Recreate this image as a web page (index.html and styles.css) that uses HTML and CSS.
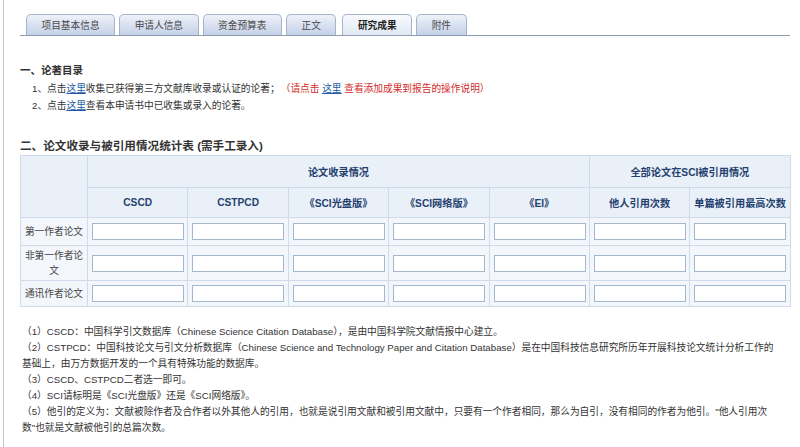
FILE: index.html
```html
<!DOCTYPE html>
<html lang="zh-CN">
<head>
<meta charset="utf-8">
<title>研究成果</title>
<link rel="stylesheet" href="styles.css">
</head>
<body>
<div class="page">
  <div class="tabs">
    <div class="tab">项目基本信息</div>
    <div class="tab">申请人信息</div>
    <div class="tab">资金预算表</div>
    <div class="tab">正文</div>
    <div class="tab active">研究成果</div>
    <div class="tab">附件</div>
  </div>

  <h2 class="h1">一、论著目录</h2>
  <ol class="links">
    <li>1、点击<a href="#">这里</a>收集已获得第三方文献库收录或认证的论著；<span class="red">（请点击 <a href="#">这里</a> 查看添加成果到报告的操作说明）</span></li>
    <li>2、点击<a href="#">这里</a>查看本申请书中已收集或录入的论著。</li>
  </ol>

  <h2 class="h2">二、论文收录与被引用情况统计表 (需手工录入)</h2>
  <table class="stats">
    <colgroup>
      <col class="c0"><col class="c"><col class="c"><col class="c"><col class="c"><col class="c"><col class="c"><col class="c">
    </colgroup>
    <tr class="r1">
      <th rowspan="2"></th>
      <th colspan="5">论文收录情况</th>
      <th colspan="2">全部论文在SCI被引用情况</th>
    </tr>
    <tr class="r2">
      <th>CSCD</th>
      <th>CSTPCD</th>
      <th>《SCI光盘版》</th>
      <th>《SCI网络版》</th>
      <th>《EI》</th>
      <th>他人引用次数</th>
      <th>单篇被引用最高次数</th>
    </tr>
    <tr class="r3">
      <td class="lbl">第一作者论文</td>
      <td><input type="text"></td><td><input type="text"></td><td><input type="text"></td><td><input type="text"></td><td><input type="text"></td><td><input type="text"></td><td><input type="text"></td>
    </tr>
    <tr class="r4">
      <td class="lbl">非第一作者论文</td>
      <td><input type="text"></td><td><input type="text"></td><td><input type="text"></td><td><input type="text"></td><td><input type="text"></td><td><input type="text"></td><td><input type="text"></td>
    </tr>
    <tr class="r5">
      <td class="lbl">通讯作者论文</td>
      <td><input type="text"></td><td><input type="text"></td><td><input type="text"></td><td><input type="text"></td><td><input type="text"></td><td><input type="text"></td><td><input type="text"></td>
    </tr>
  </table>

  <div class="notes">
    <p>（1）CSCD：中国科学引文数据库（Chinese Science Citation Database），是由中国科学院文献情报中心建立。</p>
    <p>（2）CSTPCD：中国科技论文与引文分析数据库（Chinese Science and Technology Paper and Citation Database）是在中国科技信息研究所历年开展科技论文统计分析工作的基础上，由万方数据开发的一个具有特殊功能的数据库。</p>
    <p>（3）CSCD、CSTPCD二者选一即可。</p>
    <p>（4）SCI请标明是《SCI光盘版》还是《SCI网络版》。</p>
    <p>（5）他引的定义为：文献被除作者及合作者以外其他人的引用，也就是说引用文献和被引用文献中，只要有一个作者相同，那么为自引，没有相同的作者为他引。"他人引用次数"也就是文献被他引的总篇次数。</p>
  </div>
</div>
</body>
</html>
```

FILE: styles.css
```css
html, body {
  margin: 0;
  padding: 0;
  background: #fff;
}

body {
  font-family: "Liberation Sans", "Noto Sans CJK SC", sans-serif;
  font-size: 9.7px;
  color: #333;
}

.page {
  margin-left: 3px;
  border-left: 1px solid #c6c6c6;
  min-height: 447px;
  padding: 0 10px 0 16px;
  box-sizing: border-box;
}

/* tabs */
.tabs {
  display: flex;
  align-items: flex-end;
  gap: 4px;
  padding: 14px 0 0 6px;
  border-bottom: 1px solid #8e9cb3;
}

.tab {
  height: 20px;
  line-height: 20px;
  padding: 0 14.5px;
  border: 1px solid #a6b4cb;
  border-bottom: none;
  border-radius: 5px 5px 0 0;
  background: linear-gradient(#eef2f9, #c4d1e8);
  color: #4a4a4a;
  font-family: "Noto Sans CJK SC", sans-serif;
  white-space: nowrap;
}

.tab.active {
  margin-left: 2px;
  background: linear-gradient(#f8fafd, #e0e8f4);
  font-weight: bold;
  color: #222;
}

/* headings */
.h1 {
  margin: 27px 0 0 0;
  font-size: 10.5px;
  line-height: 14px;
  font-weight: bold;
  color: #333;
}

.links {
  list-style: none;
  margin: 3px 0 0 0;
  padding: 0 0 0 12px;
  line-height: 17px;
}

.links a {
  color: #1d5ba8;
  text-decoration: underline;
}

.red {
  margin-left: 6px;
  color: #d22b2b;
}

.h2 {
  margin: 24px 0 1px 0;
  font-size: 11.6px;
  line-height: 16px;
  font-weight: bold;
  color: #333;
}

/* table */
.stats {
  width: 770px;
  border-collapse: collapse;
  table-layout: fixed;
  border: 1px solid #c7d5e6;
}

.stats .c0 { width: 67px; }
.stats .c { width: 100.4px; }

.stats th, .stats td {
  border: 1px solid #cfdbea;
  padding: 0;
  text-align: center;
  vertical-align: middle;
}

.stats th {
  background: #eaf0f8;
  color: #24406f;
  font-weight: bold;
  font-size: 10.2px;
  white-space: nowrap;
}

.stats td {
  background: #f3f6fa;
}

.stats .r1 { height: 32px; }
.stats .r2 { height: 30px; }
.stats .r3 { height: 28px; }
.stats .r4 { height: 35px; }
.stats .r5 { height: 26px; }

.stats .lbl {
  padding: 0 1px;
  color: #444;
  line-height: 15px;
  font-family: "Noto Sans CJK SC", sans-serif;
}

.stats input {
  display: block;
  margin: 0 auto 0 4px;
  width: 92px;
  height: 17px;
  box-sizing: border-box;
  border: 1px solid #a4b8cd;
  background: #fff;
  padding: 0;
}

/* notes */
.notes {
  margin-top: 17px;
  width: 753px;
  line-height: 16px;
  color: #333;
  padding-left: 2px;
}

.notes p {
  margin: 0;
}
```
